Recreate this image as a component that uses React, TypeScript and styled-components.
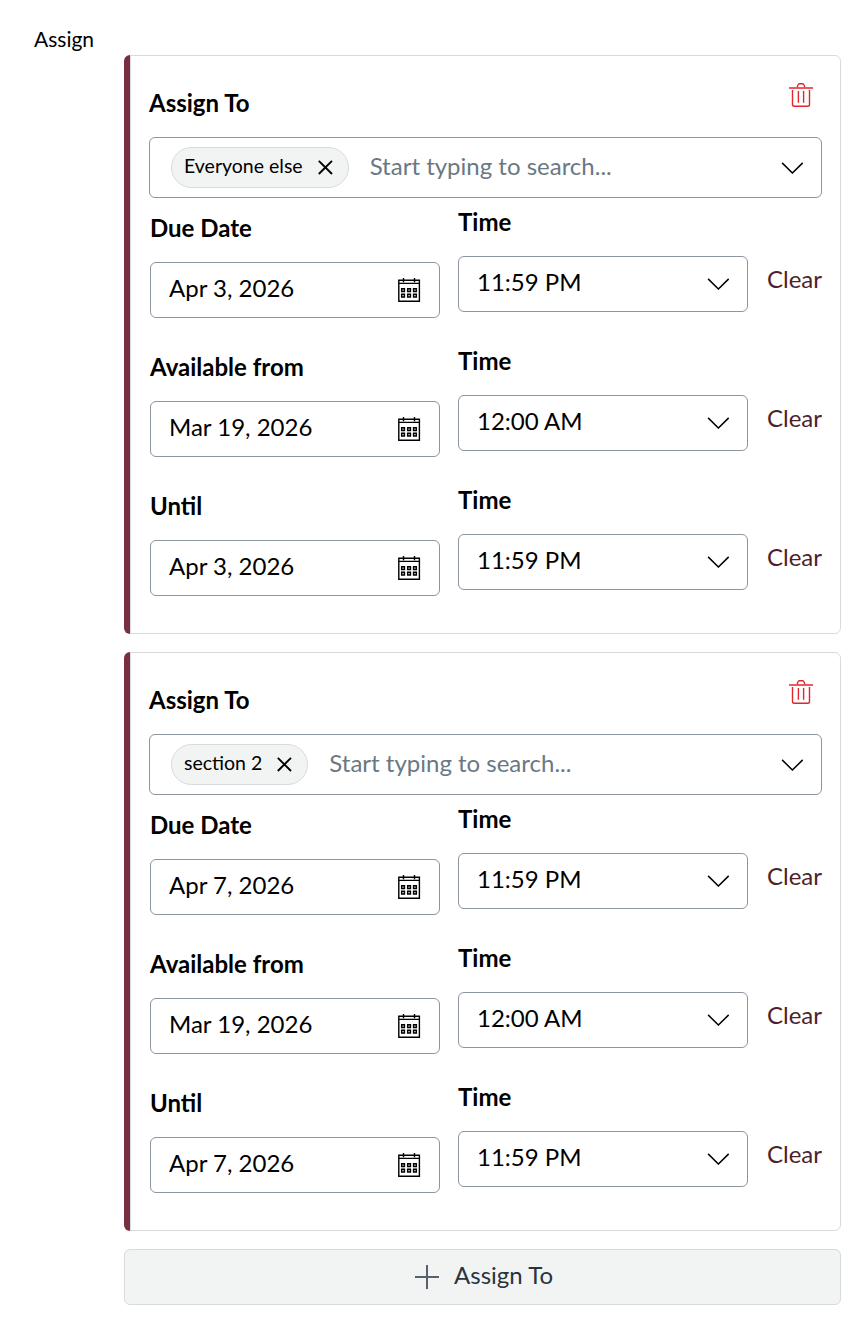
import React from "react";
import styled, { createGlobalStyle } from "styled-components";

const GlobalStyle = createGlobalStyle`
  * { box-sizing: border-box; }
  body { margin: 0; background: #fff; color: #000; font-family: Lato, "Liberation Sans", sans-serif; font-size: 24px; }
  button { font: inherit; border: 0; background: none; padding: 0; cursor: pointer; }
`;

const Page = styled.main`
  display: flex;
  align-items: flex-start;
  width: 868px;
  height: 1335px;
  padding: 24px 27px 0 34px;
`;

const SideLabel = styled.div`
  width: 90px;
  flex: none;
  font-size: 21px;
  line-height: 30px;
`;

const Cards = styled.div`
  flex: 1;
  display: flex;
  flex-direction: column;
  gap: 18px;
  padding-top: 31px;
`;

const Card = styled.section`
  display: flex;
  height: 579px;
`;

const Accent = styled.div`
  width: 6px;
  background: #782f40;
  border-radius: 6px 0 0 6px;
`;

const CardBody = styled.div`
  flex: 1;
  border: 1px solid #d7dade;
  border-radius: 0 6px 6px 0;
  padding: 0 18px;
`;

const Header = styled.div`
  display: flex;
  justify-content: space-between;
  height: 81px;
  padding: 27px 9px 0 0;
`;

const Label = styled.div`
  font-weight: 700;
  line-height: 40px;
`;

const TrashButton = styled.button`
  display: flex;
  height: 25px;
`;

const Search = styled.div`
  display: flex;
  align-items: center;
  height: 61px;
  padding: 0 18px 0 21px;
  border: 1px solid #8d959f;
  border-radius: 6px;
`;

const Pill = styled.span`
  display: flex;
  align-items: center;
  gap: 15px;
  height: 41px;
  padding: 0 14px 0 12px;
  border: 1px solid #d7dade;
  border-radius: 21px;
  background: #f2f4f4;
  font-size: 19.5px;
  line-height: 36px;
`;

const PillText = styled.span`
  padding-bottom: 3px;
`;

const Placeholder = styled.span`
  flex: 1;
  margin-left: 21px;
  padding-bottom: 4px;
  color: #6a7883;
`;

const Row = styled.div`
  display: grid;
  grid-template-columns: 290px 290px auto;
  column-gap: 18px;
  height: 139px;
  padding-left: 1px;
`;

const Column = styled.div<{ $drop?: number }>`
  padding-top: ${(p) => 4 + (p.$drop ?? 0)}px;
`;

const Field = styled.div`
  display: flex;
  justify-content: space-between;
  align-items: center;
  height: 56px;
  margin-top: 14px;
  padding: 0 18px;
  border: 1px solid #8d959f;
  border-radius: 6px;
`;

const Value = styled.span`
  padding-bottom: 5px;
`;

const Clear = styled.button`
  align-self: start;
  margin: 61px 0 0 1px;
  line-height: 40px;
  text-align: left;
  color: #4f1f2c;
`;

const AddButton = styled.button`
  display: flex;
  align-items: center;
  justify-content: center;
  gap: 15px;
  height: 56px;
  padding-left: 3px;
  border: 1px solid #d7dade;
  border-radius: 6px;
  background: #f2f4f4;
  color: #273540;
`;

const AddText = styled.span`
  padding-bottom: 5px;
`;

const Chevron = () => (
  <svg width="22" height="12" viewBox="0 0 22 12" fill="none" stroke="#000" strokeWidth="1.5">
    <path d="M1.1.9 11.4 11 21.7.9" />
  </svg>
);

const Cross = () => (
  <svg width="16" height="16" viewBox="0 0 16 16" fill="none" stroke="#000" strokeWidth="1.9">
    <path d="M.8.8 14 14M14 .8.8 14" />
  </svg>
);

const Trash = () => (
  <svg width="24" height="25" viewBox="0 0 24 25" fill="none" stroke="#e0252f" strokeWidth="1.4">
    <path d="M0 5h24" stroke="#ea5a61" strokeWidth="2" />
    <path d="M8.2 4.3 9 1.9c.2-.7.7-1.1 1.4-1.1h3.2c.7 0 1.2.4 1.4 1.1l.8 2.4M3.5 7v14.5c0 1.1.7 1.8 1.8 1.8h13.4c1.1 0 1.8-.7 1.8-1.8V7M9.4 8v11.7M14.6 8v11.7" />
  </svg>
);

const Calendar = () => (
  <svg width="23" height="24" viewBox="0 0 23 24" fill="none" stroke="#000" strokeWidth="1.4">
    <path d="M.8 2.3h20.6v21H.8zM5.5 0v4.3M16.5 0v4.3M.8 5.4h20.6" />
    <path d="M3.7 10.7h2.7v2.7H3.7zM9.7 10.7h2.7v2.7H9.7zM15.6 10.7h2.7v2.7h-2.7zM3.7 16.2h2.7v2.7H3.7zM9.7 16.2h2.7v2.7H9.7zM15.6 16.2h2.7v2.7h-2.7z" strokeWidth="1.5" />
  </svg>
);

const Plus = () => (
  <svg width="24" height="24" viewBox="0 0 24 24" fill="none" stroke="#56626e" strokeWidth="2">
    <path d="M12 0v24M0 12h24" />
  </svg>
);

interface Assignment {
  target: string;
  rows: { label: string; date: string; time: string }[];
}

const makeAssignment = (target: string, due: string): Assignment => ({
  target,
  rows: [
    { label: "Due Date", date: due, time: "11:59 PM" },
    { label: "Available from", date: "Mar 19, 2026", time: "12:00 AM" },
    { label: "Until", date: due, time: "11:59 PM" },
  ],
});

const assignments = [
  makeAssignment("Everyone else", "Apr 3, 2026"),
  makeAssignment("section 2", "Apr 7, 2026"),
];

const AssignmentCard = ({ target, rows }: Assignment) => (
  <Card>
    <Accent />
    <CardBody>
      <Header>
        <Label>Assign To</Label>
        <TrashButton aria-label="Delete"><Trash /></TrashButton>
      </Header>
      <Search>
        <Pill><PillText>{target}</PillText><Cross /></Pill>
        <Placeholder>Start typing to search...</Placeholder>
        <Chevron />
      </Search>
      {rows.map((row) => (
        <Row key={row.label}>
          <Column $drop={6}>
            <Label>{row.label}</Label>
            <Field><Value>{row.date}</Value><Calendar /></Field>
          </Column>
          <Column>
            <Label>Time</Label>
            <Field><Value>{row.time}</Value><Chevron /></Field>
          </Column>
          <Clear>Clear</Clear>
        </Row>
      ))}
    </CardBody>
  </Card>
);

export default function App() {
  return (
    <>
      <GlobalStyle />
      <Page>
        <SideLabel>Assign</SideLabel>
        <Cards>
          {assignments.map((a) => <AssignmentCard key={a.target} {...a} />)}
          <AddButton><Plus /><AddText>Assign To</AddText></AddButton>
        </Cards>
      </Page>
    </>
  );
}
